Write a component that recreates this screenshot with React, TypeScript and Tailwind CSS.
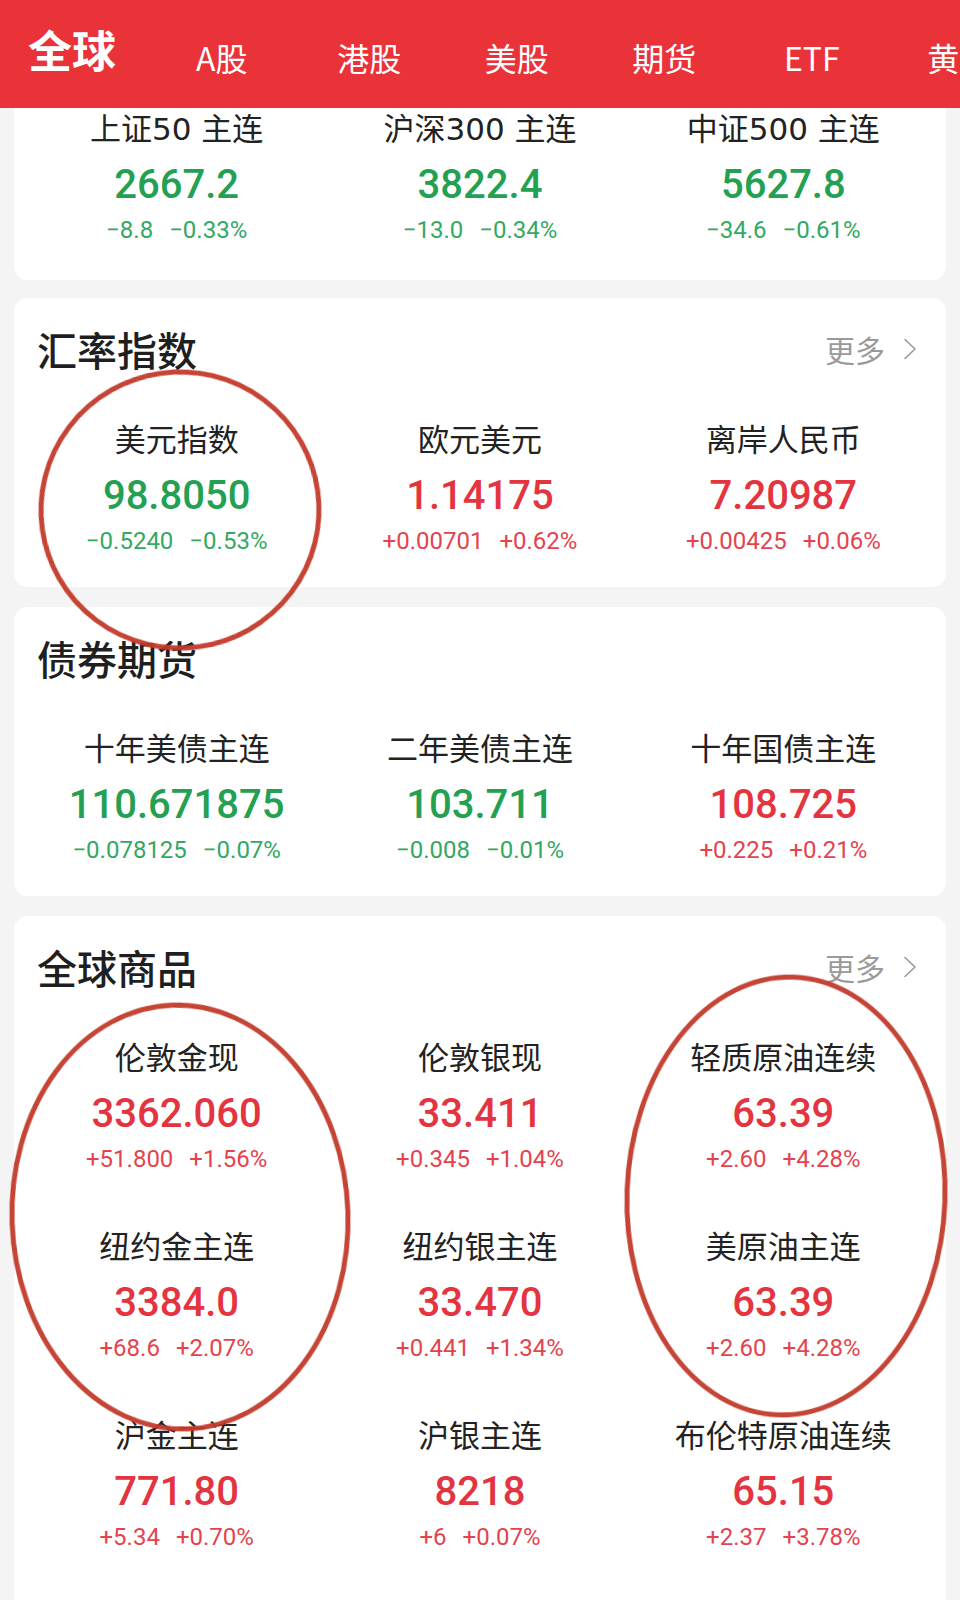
import React from 'react'

type Quote = {
  name: string
  price: string
  change: string
  pct: string
  up: boolean
}

const TABS = ['A股', '港股', '美股', '期货', 'ETF', '黄金']

const futures: Quote[] = [
  { name: '上证50 主连', price: '2667.2', change: '−8.8', pct: '−0.33%', up: false },
  { name: '沪深300 主连', price: '3822.4', change: '−13.0', pct: '−0.34%', up: false },
  { name: '中证500 主连', price: '5627.8', change: '−34.6', pct: '−0.61%', up: false },
]

const fx: Quote[] = [
  { name: '美元指数', price: '98.8050', change: '−0.5240', pct: '−0.53%', up: false },
  { name: '欧元美元', price: '1.14175', change: '+0.00701', pct: '+0.62%', up: true },
  { name: '离岸人民币', price: '7.20987', change: '+0.00425', pct: '+0.06%', up: true },
]

const bonds: Quote[] = [
  { name: '十年美债主连', price: '110.671875', change: '−0.078125', pct: '−0.07%', up: false },
  { name: '二年美债主连', price: '103.711', change: '−0.008', pct: '−0.01%', up: false },
  { name: '十年国债主连', price: '108.725', change: '+0.225', pct: '+0.21%', up: true },
]

const commodities: Quote[] = [
  { name: '伦敦金现', price: '3362.060', change: '+51.800', pct: '+1.56%', up: true },
  { name: '伦敦银现', price: '33.411', change: '+0.345', pct: '+1.04%', up: true },
  { name: '轻质原油连续', price: '63.39', change: '+2.60', pct: '+4.28%', up: true },
  { name: '纽约金主连', price: '3384.0', change: '+68.6', pct: '+2.07%', up: true },
  { name: '纽约银主连', price: '33.470', change: '+0.441', pct: '+1.34%', up: true },
  { name: '美原油主连', price: '63.39', change: '+2.60', pct: '+4.28%', up: true },
  { name: '沪金主连', price: '771.80', change: '+5.34', pct: '+0.70%', up: true },
  { name: '沪银主连', price: '8218', change: '+6', pct: '+0.07%', up: true },
  { name: '布伦特原油连续', price: '65.15', change: '+2.37', pct: '+3.78%', up: true },
]

const CJK = "font-['Noto_Sans_CJK_SC',sans-serif]"
const LABEL = "font-['DejaVu_Sans','Noto_Sans_CJK_SC',sans-serif]"
const NUM = "font-['Roboto','Noto_Sans_CJK_SC',sans-serif]"

function QuoteCell({ q }: { q: Quote }) {
  return (
    <div className="flex flex-col items-center">
      <span className={`${LABEL} text-[31px] leading-[36px] text-[#222] whitespace-nowrap`}>{q.name}</span>
      <span
        className={`${NUM} mt-[13px] text-[40px] leading-[50px] font-medium ${
          q.up ? 'text-[#e3343f]' : 'text-[#23a052]'
        }`}
      >
        {q.price}
      </span>
      <div
        className={`${NUM} mt-[3px] flex gap-4 text-[24px] leading-[34px] ${
          q.up ? 'text-[#e4434d]' : 'text-[#33a862]'
        }`}
      >
        <span>{q.change}</span>
        <span>{q.pct}</span>
      </div>
    </div>
  )
}

function SectionCard({
  title,
  more,
  items,
  last,
}: {
  title: string
  more?: boolean
  items: Quote[]
  last?: boolean
}) {
  return (
    <div className={`mx-[14px] bg-white rounded-[14px] pt-[27px] ${last ? 'pb-[80px]' : 'pb-[29px]'}`}>
      <div className="flex items-center justify-between pl-[23px] pr-[29px] h-[48px]">
        <h2 className={`${CJK} text-[40px] leading-[48px] font-medium text-[#1f1f1f]`}>{title}</h2>
        {more && (
          <div className="flex items-center gap-[18px] text-[#9a9a9a]">
            <span className={`${CJK} text-[30px] leading-none`}>更多</span>
            <svg width="14" height="22" viewBox="0 0 14 22" fill="none">
              <path d="M2 1.5 L12 11 L2 20.5" stroke="#9a9a9a" strokeWidth="1.6" strokeLinecap="round" strokeLinejoin="round" />
            </svg>
          </div>
        )}
      </div>
      <div className="mt-[49px] grid grid-cols-3 gap-y-[53px] px-[11px]">
        {items.map((q) => (
          <QuoteCell key={q.name} q={q} />
        ))}
      </div>
    </div>
  )
}

export default function App() {
  return (
    <div className="relative w-[960px] h-[1600px] overflow-hidden bg-[#f4f4f4]">
      {/* ── Top tabs ─────────────────────────────────────────── */}
      <div className="flex items-end h-[108px] pb-[31px] bg-[#ea3239] text-white overflow-hidden whitespace-nowrap">
        <div className="w-[148px] shrink-0 pl-[28px] pb-[3px]">
          <span className={`${CJK} text-[44px] leading-none font-bold`}>全球</span>
        </div>
        {TABS.map((t) => (
          <div key={t} className="w-[147.5px] shrink-0 text-center">
            <span className={`${CJK} text-[32px] leading-none`}>{t}</span>
          </div>
        ))}
      </div>

      {/* ── Index futures (scrolled, title hidden) ───────────── */}
      <div className="mx-[14px] bg-white rounded-b-[14px] pt-[3px] pb-[33px]">
        <div className="grid grid-cols-3 px-[11px]">
          {futures.map((q) => (
            <QuoteCell key={q.name} q={q} />
          ))}
        </div>
      </div>

      <div className="mt-[18px]">
        <SectionCard title="汇率指数" more items={fx} />
      </div>
      <div className="mt-[20px]">
        <SectionCard title="债券期货" items={bonds} />
      </div>
      <div className="mt-[20px]">
        <SectionCard title="全球商品" more items={commodities} last />
      </div>

      {/* ── Hand-drawn highlight marks ───────────────────────── */}
      <svg
        className="absolute top-0 left-0 pointer-events-none"
        width="960"
        height="1600"
        viewBox="0 0 960 1600"
        fill="none"
      >
        <g stroke="#c23a2b" strokeWidth="5" opacity="0.95">
          <ellipse cx="180" cy="510" rx="139" ry="138" transform="rotate(-8 180 510)" />
          <ellipse cx="180" cy="1217" rx="168" ry="212" transform="rotate(-2 180 1217)" />
          <ellipse cx="786" cy="1196" rx="159" ry="219" transform="rotate(2 786 1196)" />
        </g>
      </svg>
    </div>
  )
}
